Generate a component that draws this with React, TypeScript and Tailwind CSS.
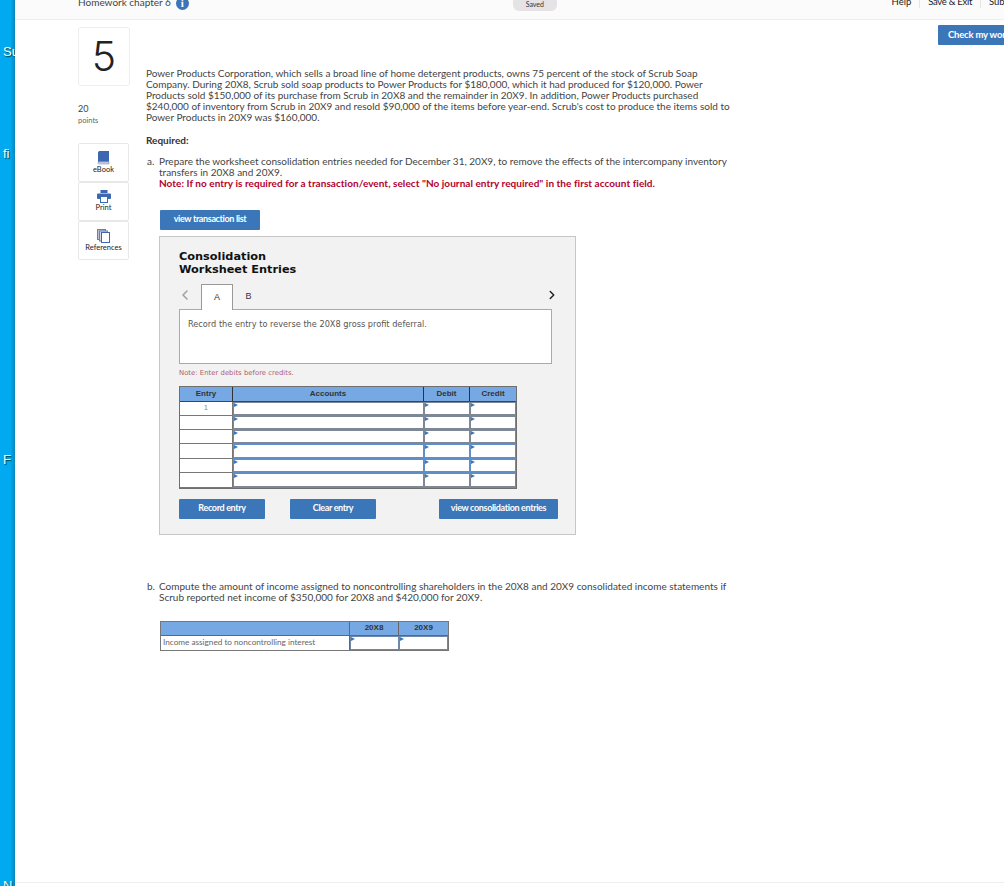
import { ChevronLeft, ChevronRight } from "lucide-react";

const rowLines = ["#7d8796", "#7d8796", "#7d8796", "#5f8fc9", "#5f8fc9", "#7d8796"];
const rowHeights = ["h-[14px]", "h-[14px]", "h-[14px]", "h-[15px]", "h-[14px]", "h-[15px]"];

function Marker() {
  return (
    <span className="absolute left-0 top-0 h-0 w-0 border-y-[2.5px] border-l-[4px] border-y-transparent border-l-[#3b78bb]" />
  );
}

function InputCell({ width, color }: { width: string; color: string }) {
  return (
    <div className={`relative h-full border border-b-2 bg-white ${width}`} style={{ borderColor: color }}>
      <Marker />
    </div>
  );
}

function BlueButton({ label, width }: { label: string; width: string }) {
  return (
    <button className={`flex h-5 items-center justify-center rounded-[1px] bg-[#3b76b9] pb-[3px] text-[9px] font-bold tracking-[-0.35px] text-white ${width}`}>
      {label}
    </button>
  );
}

function Tool({ label, icon }: { label: string; icon: React.ReactNode }) {
  return (
    <div className="flex h-[39px] w-[51px] flex-col items-center rounded-[2px] border border-[#e8e8e8] pt-[7px] text-[7.5px] leading-[9px] text-[#222]">
      {icon}
      <span>{label}</span>
    </div>
  );
}

export default function App() {
  return (
    <div className="flex h-[886px] w-[1004px] overflow-hidden bg-white font-['Lato',sans-serif] text-[#333]">
      <div className="flex w-[15px] shrink-0 flex-col overflow-hidden bg-gradient-to-r from-[#00a9f0] from-70% to-[#0a86bd] pl-[3px] font-['Liberation_Sans',sans-serif] text-[13px] leading-4 text-white [text-shadow:1px_1px_1px_#044]">
        <span className="mt-[44px]">Su</span>
        <span className="mt-[86px]">fi</span>
        <span className="mt-[290px]">F</span>
        <span className="mt-[410px]">N</span>
      </div>

      <div className="flex min-w-0 flex-1 flex-col">
        <header className="flex h-5 shrink-0 items-start border-b border-[#eeeeee] bg-[#fbfbfb] pl-[63px] text-[10px]">
          <span className="mt-[-4px] leading-3 text-[#444]">Homework chapter 6</span>
          <span className="ml-[5px] mt-[-3px] flex h-[13px] w-[13px] items-center justify-center rounded-full bg-[#3b76b9] font-['Liberation_Serif',serif] text-[11px] font-bold leading-none text-white">
            i
          </span>
          <span className="ml-[324px] flex h-[11px] w-[44px] items-center justify-center rounded-b-[6px] bg-[#e5e3e5] pb-[2px] text-[7px] text-[#333]">
            Saved
          </span>
          <div className="ml-auto mt-[-4px] flex items-start text-[9.5px] leading-3 text-[#222]">
            <span className="border-r border-[#e5e5e5] pr-2">Help</span>
            <span className="border-r border-[#e5e5e5] px-2 tracking-[-0.3px]">Save &amp; Exit</span>
            <span className="w-[23px] overflow-hidden pl-2">Submit</span>
          </div>
        </header>

        <main className="flex min-h-0 flex-1 pl-[63px]">
          <aside className="flex w-[68px] shrink-0 flex-col">
            <div className="mt-[7px] flex h-[59px] w-[52px] items-center justify-center rounded-[3px] border border-[#eeeeee] font-['Inter',sans-serif] text-[41px] font-light leading-none text-[#222]">
              5
            </div>
            <div className="mt-[17px] text-[9px] leading-3 text-[#444]">20</div>
            <div className="text-[7.5px] leading-3 text-[#666]">points</div>
            <div className="mt-[16px] flex flex-col">
              <Tool
                label="eBook"
                icon={
                  <svg width="13" height="14" viewBox="0 0 13 14">
                    <path d="M1 1.5 2 0h10v11H2.5L1 12z" fill="#3b68b0" />
                    <path d="M1 12c0-1 .6-1.2 1.5-1.2H12V13H2.5C1.6 13 1 12.8 1 12z" fill="#c9cfe6" stroke="#8b93c8" strokeWidth=".6" />
                  </svg>
                }
              />
              <Tool
                label="Print"
                icon={
                  <svg width="14" height="13" viewBox="0 0 14 13">
                    <rect x="3.5" y="0" width="7" height="3" fill="#3b68b0" />
                    <rect x="0" y="3.5" width="14" height="5.5" rx="1" fill="#3b68b0" />
                    <rect x="3.5" y="6.5" width="7" height="6" fill="#fff" stroke="#3b68b0" />
                  </svg>
                }
              />
              <Tool
                label="References"
                icon={
                  <svg width="13" height="14" viewBox="0 0 13 14" fill="#fff">
                    <rect x="0.5" y="0.5" width="8" height="10" fill="#b9bfd6" stroke="#6f7fa8" />
                    <rect x="2.5" y="2" width="8" height="10" fill="#d5d9e8" stroke="#6f7fa8" />
                    <rect x="4.5" y="3.5" width="8" height="10" stroke="#3b68b0" />
                  </svg>
                }
              />
            </div>
          </aside>

          <section className="min-w-0 flex-1 text-[10px] leading-[11px] text-[#444]">
            <div className="mt-[5px] flex justify-end">
              <button className="mr-[-10px] flex h-5 w-[76px] items-center whitespace-nowrap rounded-[1px] bg-[#3b76b9] pb-[2px] pl-[10px] text-[9.5px] font-bold tracking-[-0.2px] text-white">
                Check my work
              </button>
            </div>

            <p className="mt-[23px] whitespace-nowrap">
              Power Products Corporation, which sells a broad line of home detergent products, owns 75 percent of the stock of Scrub Soap
              <br />
              Company. During 20X8, Scrub sold soap products to Power Products for $180,000, which it had produced for $120,000. Power
              <br />
              Products sold $150,000 of its purchase from Scrub in 20X8 and the remainder in 20X9. In addition, Power Products purchased
              <br />
              $240,000 of inventory from Scrub in 20X9 and resold $90,000 of the items before year-end. Scrub's cost to produce the items sold to
              <br />
              Power Products in 20X9 was $160,000.
            </p>

            <p className="mt-[12px] font-bold text-[#333]">Required:</p>

            <div className="mt-[10px] flex whitespace-nowrap">
              <span className="ml-[1px] w-[12px]">a.</span>
              <div>
                Prepare the worksheet consolidation entries needed for December 31, 20X9, to remove the effects of the intercompany inventory
                <br />
                transfers in 20X8 and 20X9.
                <br />
                <span className="font-bold tracking-[0.05px] text-[#b3002d]">
                  Note: If no entry is required for a transaction/event, select "No journal entry required" in the first account field.
                </span>
              </div>
            </div>

            <div className="ml-[14px] mt-[21px]">
              <BlueButton label="view transaction list" width="w-[100px]" />
            </div>

            <div className="ml-[13px] mt-[6px] h-[299px] w-[417px] border border-[#c6c6c6] bg-[#f2f2f2] pl-[19px] pt-[13px] font-['DejaVu_Sans',sans-serif]">
              <h2 className="text-[11.3px] font-bold leading-[13px] text-[#111]">
                Consolidation
                <br />
                Worksheet Entries
              </h2>

              <div className="mt-[8px] flex h-[26px] w-[373px] items-center">
                <ChevronLeft className="mb-[4px] ml-[-2px] h-4 w-4 text-[#9aa0a6]" strokeWidth={2.25} />
                <div className="ml-[8px] flex h-[26px] w-[32px] items-center justify-center border border-b-0 border-[#999] bg-white pb-[1px] font-['Liberation_Sans',sans-serif] text-[9px] text-[#333]">
                  A
                </div>
                <div className="flex h-[26px] w-[31px] items-center justify-center pb-[1px] font-['Liberation_Sans',sans-serif] text-[9px] text-[#333]">
                  B
                </div>
                <ChevronRight className="mb-[4px] ml-auto mr-[-7px] h-[14px] w-[14px] text-[#222]" strokeWidth={2.5} />
              </div>

              <div className="mt-[-1px] h-[55px] w-[373px] border border-[#aaa] bg-white pl-[8px] pt-[9px] text-[8.2px] leading-[11px] text-[#555]">
                Record the entry to reverse the 20X8 gross profit deferral.
              </div>

              <p className="mt-[4px] text-[6.9px] leading-[11px] text-[#b0606f]">Note: Enter debits before credits.</p>

              <div className="mt-[7px] w-[338px] border border-[#6f6f6f] font-['Liberation_Sans',sans-serif]">
                <div className="flex h-[15px] border-b border-[#444] bg-[#76a9e3] text-[8px] font-bold leading-[13px] text-[#333]">
                  <span className="w-[53px] border-r border-[#333] text-center">Entry</span>
                  <span className="w-[191px] border-r border-[#333] text-center">Accounts</span>
                  <span className="w-[46px] border-r border-[#333] text-center">Debit</span>
                  <span className="flex-1 text-center">Credit</span>
                </div>
                {rowLines.map((color, i) => (
                  <div key={i} className={`flex ${rowHeights[i]}`}>
                    <div className="w-[53px] border-b border-r border-[#777] bg-white text-center text-[7px] leading-[11px] text-[#8a8560]">
                      {i === 0 ? "1" : ""}
                    </div>
                    <InputCell width="w-[191px]" color={color} />
                    <InputCell width="w-[46px]" color={color} />
                    <InputCell width="flex-1" color={color} />
                  </div>
                ))}
              </div>

              <div className="mr-[17px] mt-[10px] flex font-['Lato',sans-serif]">
                <BlueButton label="Record entry" width="w-[86px]" />
                <div className="ml-[25px]">
                  <BlueButton label="Clear entry" width="w-[86px]" />
                </div>
                <div className="ml-[63px]">
                  <BlueButton label="view consolidation entries" width="w-[119px]" />
                </div>
              </div>
            </div>

            <div className="mt-[46px] flex whitespace-nowrap">
              <span className="ml-[1px] w-[12px]">b.</span>
              <div>
                Compute the amount of income assigned to noncontrolling shareholders in the 20X8 and 20X9 consolidated income statements if
                <br />
                Scrub reported net income of $350,000 for 20X8 and $420,000 for 20X9.
              </div>
            </div>

            <div className="ml-[14px] mt-[18px] w-[289px] border border-[#777]">
              <div className="flex h-[14px] border-b border-[#666] bg-[#76a9e3] font-['Liberation_Sans',sans-serif] text-[8px] font-bold leading-[12px] text-[#333]">
                <span className="w-[189px] border-r border-[#666]" />
                <span className="w-[49px] border-r border-[#666] text-center">20X8</span>
                <span className="flex-1 text-center">20X9</span>
              </div>
              <div className="flex h-[14px] bg-white text-[8.2px] leading-[13px] text-[#666]">
                <span className="w-[189px] border-r border-[#666] pl-[2px]">Income assigned to noncontrolling interest</span>
                <div className="relative w-[49px] border border-[#6f87a8]">
                  <Marker />
                </div>
                <div className="relative flex-1 border border-[#6f87a8]">
                  <Marker />
                </div>
              </div>
            </div>
          </section>
        </main>

        <footer className="h-[4px] shrink-0 border-t border-[#eeeeee] bg-white" />
      </div>
    </div>
  );
}
